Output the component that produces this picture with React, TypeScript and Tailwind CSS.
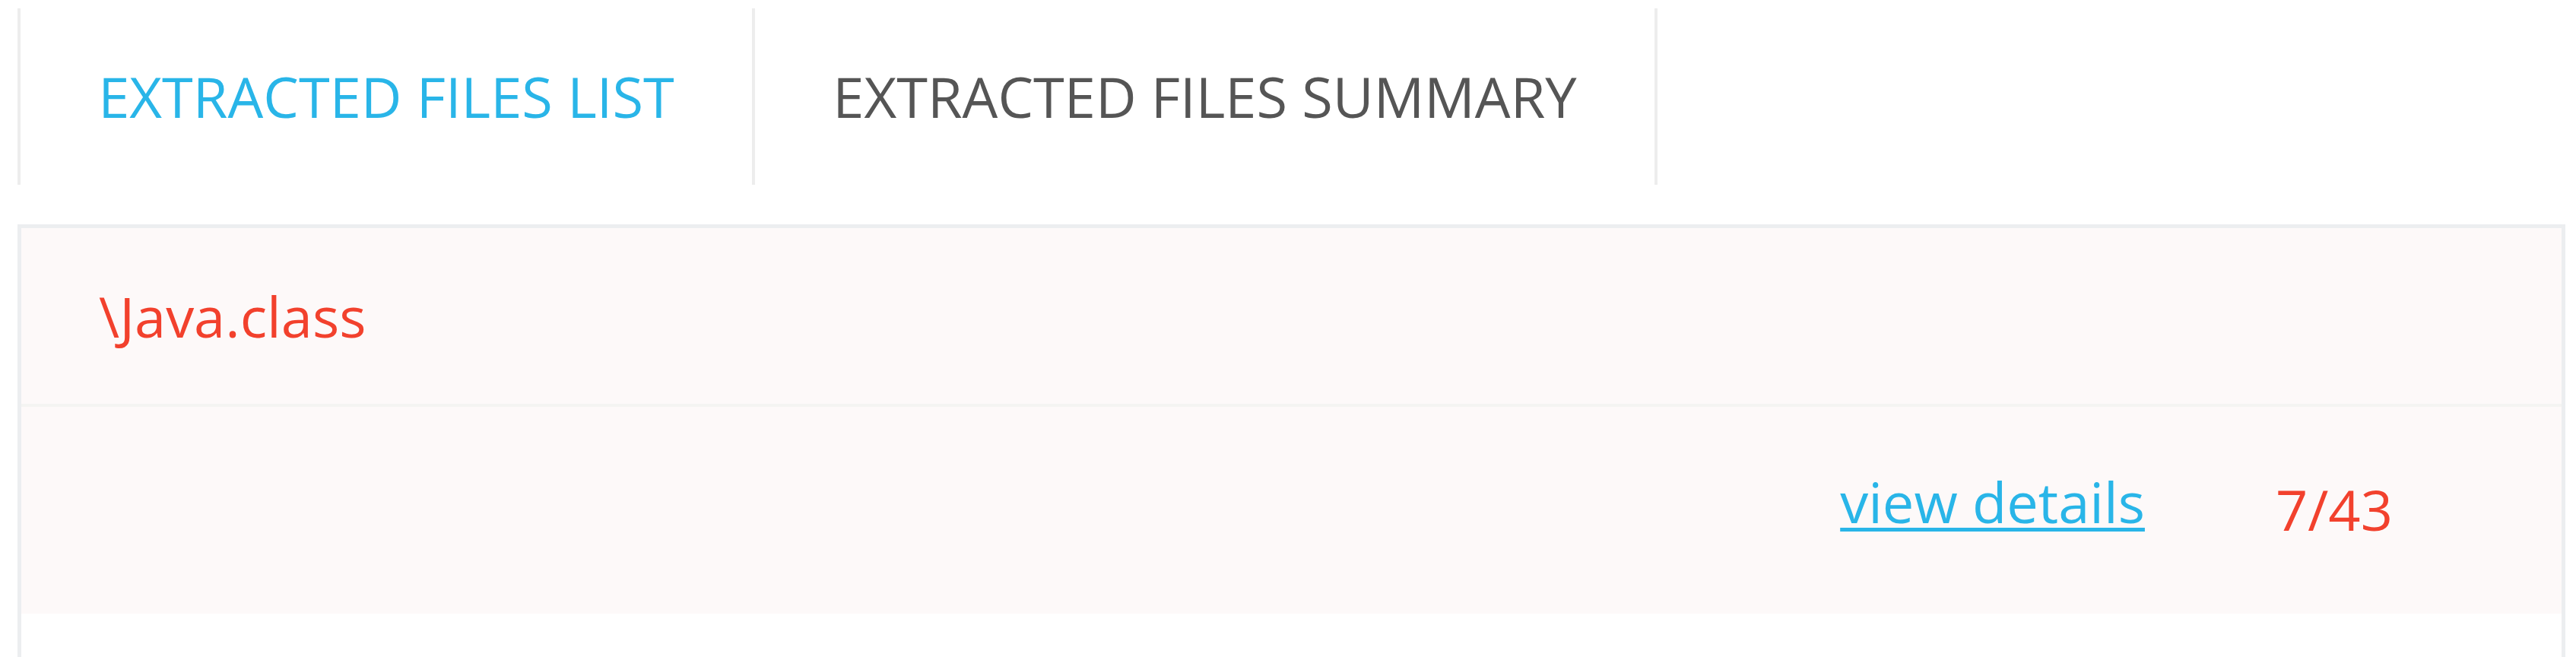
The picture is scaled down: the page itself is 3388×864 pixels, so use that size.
import { useState } from "react";

const tabs = ["EXTRACTED FILES LIST", "EXTRACTED FILES SUMMARY"];
const tabWidths = ["w-[970px] border-l-4", "w-[1187px]"];

export default function App() {
  const [active, setActive] = useState(0);

  return (
    <div className="h-[864px] overflow-hidden bg-white pl-[23px] pr-[14px] pt-[11px] font-['Open_Sans',sans-serif] text-[74px] leading-[98px]">
      <div className="flex">
        {tabs.map((tab, i) => (
          <button
            key={tab}
            onClick={() => setActive(i)}
            className={`flex h-[232px] items-center justify-center border-r-4 border-[#ededed] ${tabWidths[i]} ${
              active === i ? "text-[#29b5e8]" : "text-[#555555]"
            }`}
          >
            {tab}
          </button>
        ))}
      </div>

      <div className="mt-[52px] border-[5px] border-[#eceef0]">
        <div className="flex h-[231px] items-center bg-[#fdf9f9] pl-[102px] text-[#f2412d]">
          \Java.class
        </div>
        <div className="flex h-[276px] items-start justify-end gap-[172px] border-t-4 border-[#f4f4f2] bg-[#fdf9f9] pr-[222px] pt-[76px]">
          <a
            href="#"
            className="text-[#29b5e8] underline decoration-[5px] underline-offset-[6px]"
          >
            view details
          </a>
          <span className="mt-[10px] text-[#f2412d]">7/43</span>
        </div>
        <div className="h-[200px] bg-white" />
      </div>
    </div>
  );
}
